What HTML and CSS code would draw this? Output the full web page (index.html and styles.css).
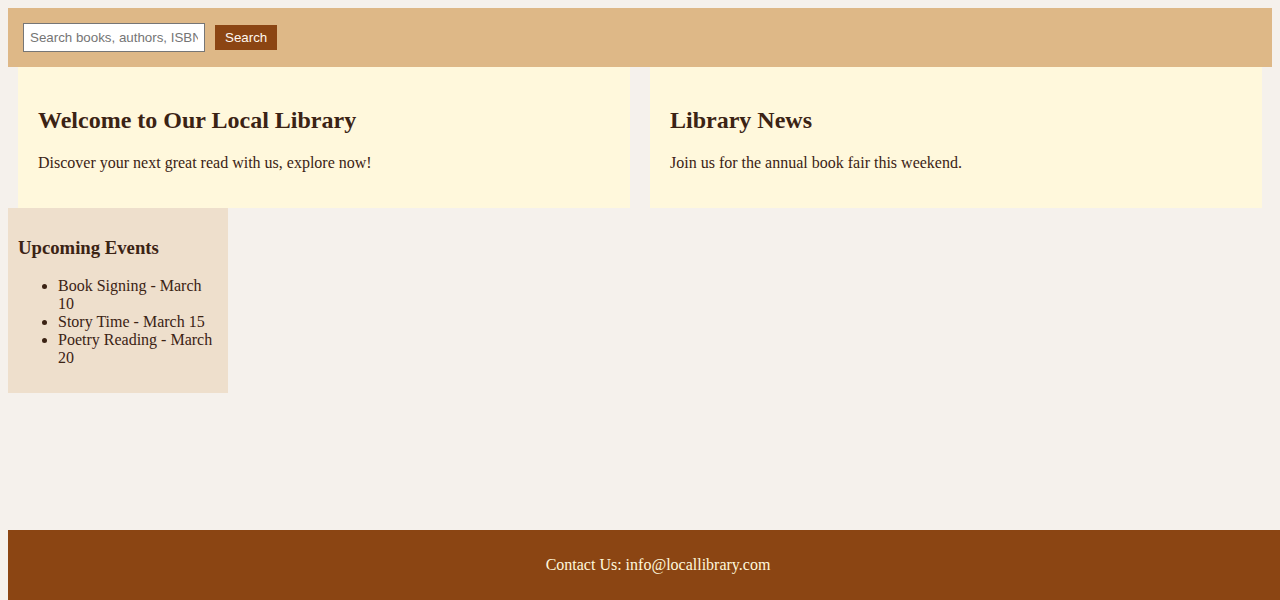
FILE: index.html
```html
<!DOCTYPE html>
<html lang="en">
<head>
<meta charset="utf-8">
<title>Local Library</title>
<link rel="stylesheet" href="styles.css">
</head>
<body>
<header class="topbar">
  <input class="search-input" type="text" placeholder="Search books, authors, ISBN...">
  <button class="search-btn" type="button">Search</button>
</header>
<main>
  <div class="cards">
    <section class="card">
      <h2>Welcome to Our Local Library</h2>
      <p>Discover your next great read with us, explore now!</p>
    </section>
    <section class="card">
      <h2>Library News</h2>
      <p>Join us for the annual book fair this weekend.</p>
    </section>
  </div>
  <aside class="sidebar">
    <h3>Upcoming Events</h3>
    <ul>
      <li>Book Signing - March 10</li>
      <li>Story Time - March 15</li>
      <li>Poetry Reading - March 20</li>
    </ul>
  </aside>
</main>
<footer class="footer">
  <p>Contact Us: info@locallibrary.com</p>
</footer>
</body>
</html>
```
FILE: styles.css
```css
html, body {
  background: #f5f1ec;
}
body {
  margin: 8px;
  font-family: "Liberation Serif", "Times New Roman", serif;
  color: #3b2314;
}
.topbar {
  background: #deb887;
  padding: 15px;
  display: flex;
  align-items: center;
  gap: 10px;
}
.search-input {
  box-sizing: border-box;
  width: 182px;
  height: 29px;
  padding: 5px 6px;
  border: 1px solid #767676;
  font-family: "Liberation Sans", Arial, sans-serif;
  font-size: 13.33px;
  background: #fff;
  margin: 0;
}
.search-input::placeholder {
  color: #757575;
}
.search-btn {
  background: #8b4513;
  color: #fff8f0;
  border: none;
  padding: 0 10px;
  height: 25px;
  font-family: "Liberation Sans", Arial, sans-serif;
  font-size: 13.33px;
  margin: 0;
}
.cards {
  display: flex;
}
.card {
  flex: 1;
  margin: 0 10px;
  padding: 20px;
  background: #fff8dc;
}
.card h2 {
  font-size: 24px;
  margin: 19.92px 0;
}
.card p {
  margin: 16px 0;
}
.sidebar {
  width: 200px;
  padding: 10px;
  background: #eedfcc;
}
.sidebar h3 {
  font-size: 18.72px;
  margin: 18.72px 0;
}
.sidebar ul {
  margin: 16px 0;
  padding-left: 40px;
}
.footer {
  position: fixed;
  bottom: 0;
  width: 100%;
  padding: 10px;
  background: #8b4513;
  color: #fff8dc;
  text-align: center;
}
.footer p {
  margin: 16px 0;
}
```
